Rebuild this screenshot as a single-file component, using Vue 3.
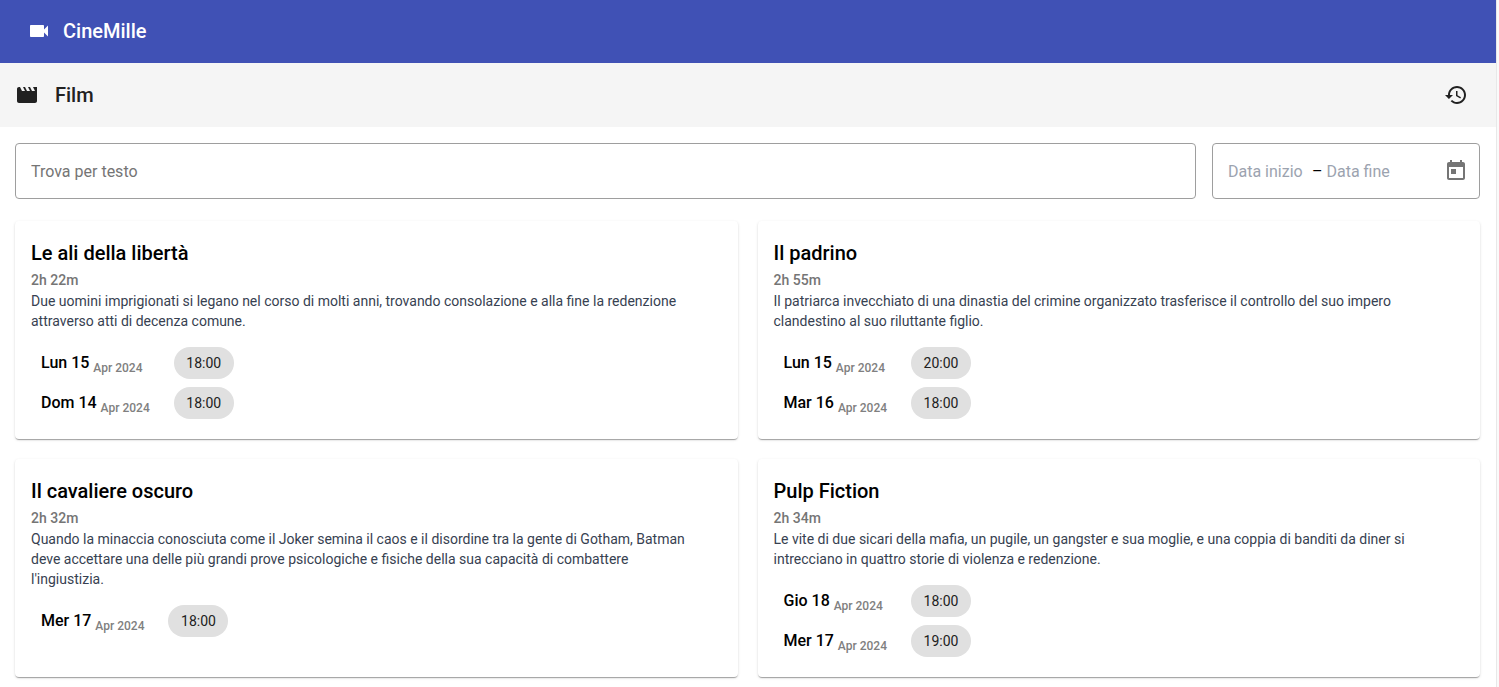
<script setup>
import { ref } from 'vue'

const search = ref('')
const startDate = ref('')
const endDate = ref('')

const films = [
  {
    title: 'Le ali della libertà',
    duration: '2h 22m',
    plot: 'Due uomini imprigionati si legano nel corso di molti anni, trovando consolazione e alla fine la redenzione attraverso atti di decenza comune.',
    days: [
      { day: 'Lun 15', month: 'Apr 2024', times: ['18:00'] },
      { day: 'Dom 14', month: 'Apr 2024', times: ['18:00'] },
    ],
  },
  {
    title: 'Il padrino',
    duration: '2h 55m',
    plot: 'Il patriarca invecchiato di una dinastia del crimine organizzato trasferisce il controllo del suo impero clandestino al suo riluttante figlio.',
    days: [
      { day: 'Lun 15', month: 'Apr 2024', times: ['20:00'] },
      { day: 'Mar 16', month: 'Apr 2024', times: ['18:00'] },
    ],
  },
  {
    title: 'Il cavaliere oscuro',
    duration: '2h 32m',
    plot: "Quando la minaccia conosciuta come il Joker semina il caos e il disordine tra la gente di Gotham, Batman deve accettare una delle più grandi prove psicologiche e fisiche della sua capacità di combattere l'ingiustizia.",
    days: [{ day: 'Mer 17', month: 'Apr 2024', times: ['18:00'] }],
  },
  {
    title: 'Pulp Fiction',
    duration: '2h 34m',
    plot: 'Le vite di due sicari della mafia, un pugile, un gangster e sua moglie, e una coppia di banditi da diner si intrecciano in quattro storie di violenza e redenzione.',
    days: [
      { day: 'Gio 18', month: 'Apr 2024', times: ['18:00'] },
      { day: 'Mer 17', month: 'Apr 2024', times: ['19:00'] },
    ],
  },
]
</script>

<template>
  <div class="app">
    <header class="topbar">
      <svg class="icon" viewBox="0 0 24 24" aria-hidden="true">
        <path d="M17 10.500V7c0-.55-.45-1-1-1H4c-.55 0-1 .45-1 1v10c0 .55.45 1 1 1h12c.55 0 1-.45 1-1v-3.500l4 4v-11l-4 4z" />
      </svg>
      <h1 class="heading">CineMille</h1>
    </header>

    <div class="subbar">
      <svg class="icon" viewBox="0 0 24 24" aria-hidden="true">
        <path d="M18 4l2 4h-3l-2-4h-2l2 4h-3l-2-4H8l2 4H7L5 4H4c-1.100 0-1.990.9-1.990 2L2 18c0 1.100.9 2 2 2h16c1.100 0 2-.9 2-2V4h-4z" />
      </svg>
      <h2 class="heading">Film</h2>
      <button class="icon-button history" type="button" aria-label="Storico">
        <svg class="icon" viewBox="0 0 24 24" aria-hidden="true">
          <path d="M13 3c-4.970 0-9 4.030-9 9H1l3.890 3.890.07.14L9 12H6c0-3.870 3.130-7 7-7s7 3.130 7 7-3.130 7-7 7c-1.930 0-3.680-.79-4.940-2.060l-1.420 1.420C8.270 19.990 10.510 21 13 21c4.970 0 9-4.030 9-9s-4.030-9-9-9zm-1 5v5l4.280 2.540.72-1.210-3.500-2.080V8H12z" />
        </svg>
      </button>
    </div>

    <main class="content">
      <form class="filters" @submit.prevent>
        <input v-model="search" class="field search" type="text" placeholder="Trova per testo" aria-label="Trova per testo" />
        <div class="field range">
          <input v-model="startDate" class="date start" type="text" placeholder="Data inizio" aria-label="Data inizio" />
          <span class="dash">–</span>
          <input v-model="endDate" class="date end" type="text" placeholder="Data fine" aria-label="Data fine" />
          <button class="icon-button calendar" type="button" aria-label="Apri calendario">
            <svg class="icon" viewBox="0 0 24 24" aria-hidden="true">
              <path fill-rule="evenodd" d="M19 3h-1V1h-2v2H8V1H6v2H5c-1.110 0-1.990.9-1.990 2L3 19c0 1.100.89 2 2 2h14c1.100 0 2-.9 2-2V5c0-1.100-.9-2-2-2zm0 16H5V8h14v11zM7 10h5v5H7z" />
            </svg>
          </button>
        </div>
      </form>

      <section class="films">
        <article v-for="film in films" :key="film.title" class="card">
          <h3 class="title">{{ film.title }}</h3>
          <p class="duration">{{ film.duration }}</p>
          <p class="plot">{{ film.plot }}</p>
          <table class="schedule">
            <tbody>
              <tr v-for="d in film.days" :key="d.day">
                <th scope="row">{{ d.day }} <sub>{{ d.month }}</sub></th>
                <td><span v-for="t in d.times" :key="t" class="chip">{{ t }}</span></td>
              </tr>
            </tbody>
          </table>
        </article>
      </section>
    </main>
  </div>
</template>

<style>
body {
  background: #fafafa;
}
</style>

<style scoped>
.app {
  box-sizing: border-box;
  min-height: 100vh;
  margin-right: 2px;
  border-right: 1px solid #e8e8e8;
  background: #fff;
  color: #000;
  font-family: Roboto, "Liberation Sans", sans-serif;
}
h1, h2, h3, p {
  margin: 0;
}
.icon {
  display: block;
  width: 24px;
  height: 24px;
  flex: none;
  fill: currentColor;
}
.topbar {
  display: flex;
  align-items: center;
  gap: 12px;
  box-sizing: border-box;
  height: 63px;
  padding: 0 27px 1px;
  background: #4051b5;
  color: #fff;
}
.subbar {
  display: flex;
  align-items: center;
  gap: 16px;
  height: 64px;
  padding: 0 28px 0 15px;
  background: #f5f5f5;
  color: #212121;
}
.heading {
  font-size: 20px;
  font-weight: 500;
  line-height: 32px;
}
.icon-button {
  padding: 0;
  border: 0;
  background: none;
  color: inherit;
  cursor: pointer;
}
.history {
  margin-left: auto;
}
.content {
  padding: 16px 16px 10px 15px;
}
.filters {
  display: flex;
  gap: 16px;
  margin-bottom: 22px;
}
.field {
  box-sizing: border-box;
  height: 56px;
  padding: 0 15px;
  border: 1px solid #9e9e9e;
  border-radius: 4px;
  background: #fff;
  font-size: 16px;
}
.search {
  flex: 1;
  min-width: 0;
  font-family: inherit;
}
.search::placeholder {
  color: #757575;
  opacity: 1;
}
.range {
  display: flex;
  align-items: center;
  gap: 4px;
  width: 268px;
  padding-right: 11px;
}
.date {
  min-width: 0;
  padding: 0;
  border: 0;
  background: none;
  font: inherit;
}
.start {
  width: 80px;
}
.end {
  flex: 1;
}
.date::placeholder {
  color: #9ca3af;
  opacity: 1;
}
.calendar {
  color: #757575;
}
.films {
  display: grid;
  grid-template-columns: repeat(2, minmax(0, 1fr));
  gap: 20px;
}
.card {
  padding: 16px;
  border-radius: 4px;
  background: #fff;
  box-shadow: 0 2px 1px -1px rgba(0, 0, 0, 0.2), 0 1px 1px rgba(0, 0, 0, 0.14), 0 1px 3px rgba(0, 0, 0, 0.12);
}
.title {
  font-size: 20px;
  font-weight: 500;
  line-height: 32px;
}
.duration {
  color: #757575;
  font-size: 14px;
  font-weight: 500;
  line-height: 22px;
}
.plot {
  padding-right: 24px;
  color: #374151;
  font-size: 14px;
  line-height: 20px;
}
.schedule {
  margin-top: 12px;
  border-collapse: collapse;
}
.schedule th {
  height: 40px;
  padding: 0 24px 0 10px;
  font-size: 16px;
  font-weight: 500;
  line-height: 24px;
  text-align: left;
  white-space: nowrap;
}
.schedule sub {
  color: #808080;
  font-size: 12px;
  line-height: 12px;
}
.schedule td {
  padding: 0;
}
.chip {
  display: block;
  box-sizing: border-box;
  min-width: 60px;
  padding: 0 12px;
  border-radius: 16px;
  background: #e0e0e0;
  color: #212121;
  font-size: 14px;
  line-height: 32px;
  text-align: center;
}
</style>
